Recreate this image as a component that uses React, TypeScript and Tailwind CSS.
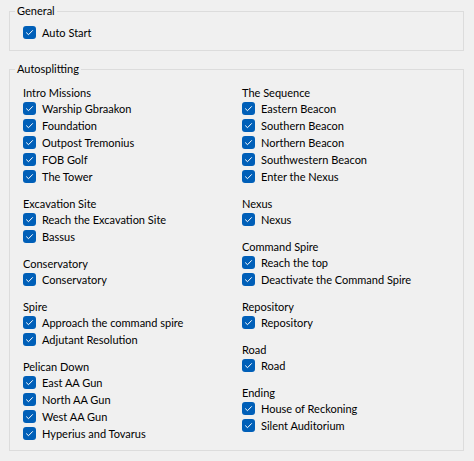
import React from "react";

type Group = { title: string; items: string[] };

const left: Group[] = [
  { title: "Intro Missions", items: ["Warship Gbraakon", "Foundation", "Outpost Tremonius", "FOB Golf", "The Tower"] },
  { title: "Excavation Site", items: ["Reach the Excavation Site", "Bassus"] },
  { title: "Conservatory", items: ["Conservatory"] },
  { title: "Spire", items: ["Approach the command spire", "Adjutant Resolution"] },
  { title: "Pelican Down", items: ["East AA Gun", "North AA Gun", "West AA Gun", "Hyperius and Tovarus"] },
];

const right: Group[] = [
  { title: "The Sequence", items: ["Eastern Beacon", "Southern Beacon", "Northern Beacon", "Southwestern Beacon", "Enter the Nexus"] },
  { title: "Nexus", items: ["Nexus"] },
  { title: "Command Spire", items: ["Reach the top", "Deactivate the Command Spire"] },
  { title: "Repository", items: ["Repository"] },
  { title: "Road", items: ["Road"] },
  { title: "Ending", items: ["House of Reckoning", "Silent Auditorium"] },
];

function Check({ label }: { label: string }) {
  return (
    <div className="flex items-center h-[17px] gap-[6px]">
      <span className="w-[13px] h-[13px] rounded-[3px] bg-[#005fb8] flex items-center justify-center shrink-0">
        <svg width="13" height="13" viewBox="0 0 13 13">
          <polyline points="3.5,6.8 5.5,8.7 9.5,4.6" fill="none" stroke="#ffffff" strokeWidth="1" strokeLinecap="round" strokeLinejoin="round" />
        </svg>
      </span>
      <span className="whitespace-nowrap pt-[2px]">{label}</span>
    </div>
  );
}

function Column({ groups }: { groups: Group[] }) {
  return (
    <div className="flex flex-col gap-[9px]">
      {groups.map((g) => (
        <div key={g.title} className="flex flex-col">
          <div className="h-[17px] flex items-center whitespace-nowrap pt-[3px]">{g.title}</div>
          {g.items.map((i) => (
            <Check key={i} label={i} />
          ))}
        </div>
      ))}
    </div>
  );
}

export default function App() {
  return (
    <div
      className="w-[474px] h-[461px] bg-[#f0f0f0] text-[11px] text-black overflow-hidden pt-[3px]"
      style={{ fontFamily: '"Segoe UI", Lato, "Liberation Sans", sans-serif' }}
    >
      <fieldset className="ml-[9px] w-[455px] border border-[#dcdcdc] px-0 pt-[5px] pb-[9px]">
        <legend className="ml-[5px] px-[2px] leading-[16px]">General</legend>
        <div className="pl-[13px]">
          <Check label="Auto Start" />
        </div>
      </fieldset>
      <fieldset className="ml-[9px] mt-[10px] w-[455px] border border-[#dcdcdc] px-0 pt-[6px] pb-[8px]">
        <legend className="ml-[5px] px-[2px] leading-[16px]">Autosplitting</legend>
        <div className="pl-[13px] grid grid-cols-[219px_1fr]">
          <Column groups={left} />
          <Column groups={right} />
        </div>
      </fieldset>
    </div>
  );
}
